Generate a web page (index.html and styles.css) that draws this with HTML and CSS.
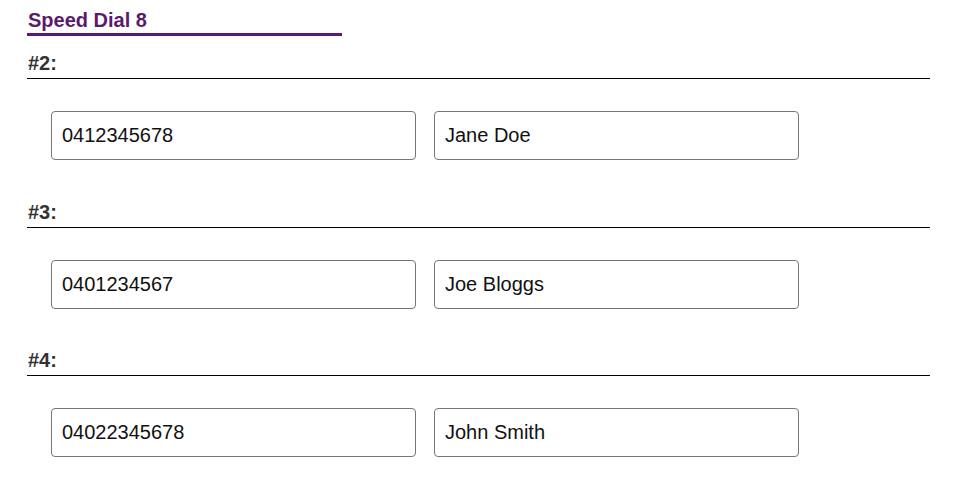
FILE: index.html
```html
<!DOCTYPE html>
<html>
  <head>
    <title>Speed Dial</title>
    <meta charset='UTF-8'>
    <link rel="stylesheet" href="styles.css">
  </head>
  <body>
    <h1 class='pageTitle'>Speed Dial 8</h1>

    <div class='dialEntry'>
      <h2 class='dialLabel'>#2:</h2>
      <div class='dialFields'>
        <input type='text' class='dialInput' value='0412345678'>
        <input type='text' class='dialInput' value='Jane Doe'>
      </div>
    </div>

    <div class='dialEntry'>
      <h2 class='dialLabel'>#3:</h2>
      <div class='dialFields'>
        <input type='text' class='dialInput' value='0401234567'>
        <input type='text' class='dialInput' value='Joe Bloggs'>
      </div>
    </div>

    <div class='dialEntry'>
      <h2 class='dialLabel'>#4:</h2>
      <div class='dialFields'>
        <input type='text' class='dialInput' value='04022345678'>
        <input type='text' class='dialInput' value='John Smith'>
      </div>
    </div>
  </body>
</html>
```

FILE: styles.css
```css
:root {
  font-family: "Liberation Sans", Arial, sans-serif;
  background-color: #fff;
}

body {
  margin: 0;
  padding: 0 30px 0 27px;
}

.pageTitle {
  display: inline-block;
  width: 314px;
  margin: 9px 0 0 0;
  padding: 0 0 1px 1px;
  font-size: 20px;
  line-height: 23px;
  font-weight: bold;
  color: #5b1a6b;
  border-bottom: 3px solid #5b1a6b;
}

.dialEntry {
  margin-top: 16px;
}

.dialEntry + .dialEntry {
  margin-top: 40.5px;
}

.dialLabel {
  margin: 0;
  padding: 0 0 3px 1px;
  font-size: 20px;
  line-height: 23px;
  font-weight: bold;
  color: #333;
  border-bottom: 1px solid #000;
}

.dialFields {
  display: flex;
  gap: 18px;
  margin-top: 32px;
  padding-left: 24px;
}

.dialInput {
  box-sizing: border-box;
  width: 365px;
  height: 49px;
  padding: 0 10px;
  font-family: "Liberation Sans", Arial, sans-serif;
  font-size: 20px;
  color: #111;
  border: 1px solid #767676;
  border-radius: 4px;
  background: #fff;
}
```
